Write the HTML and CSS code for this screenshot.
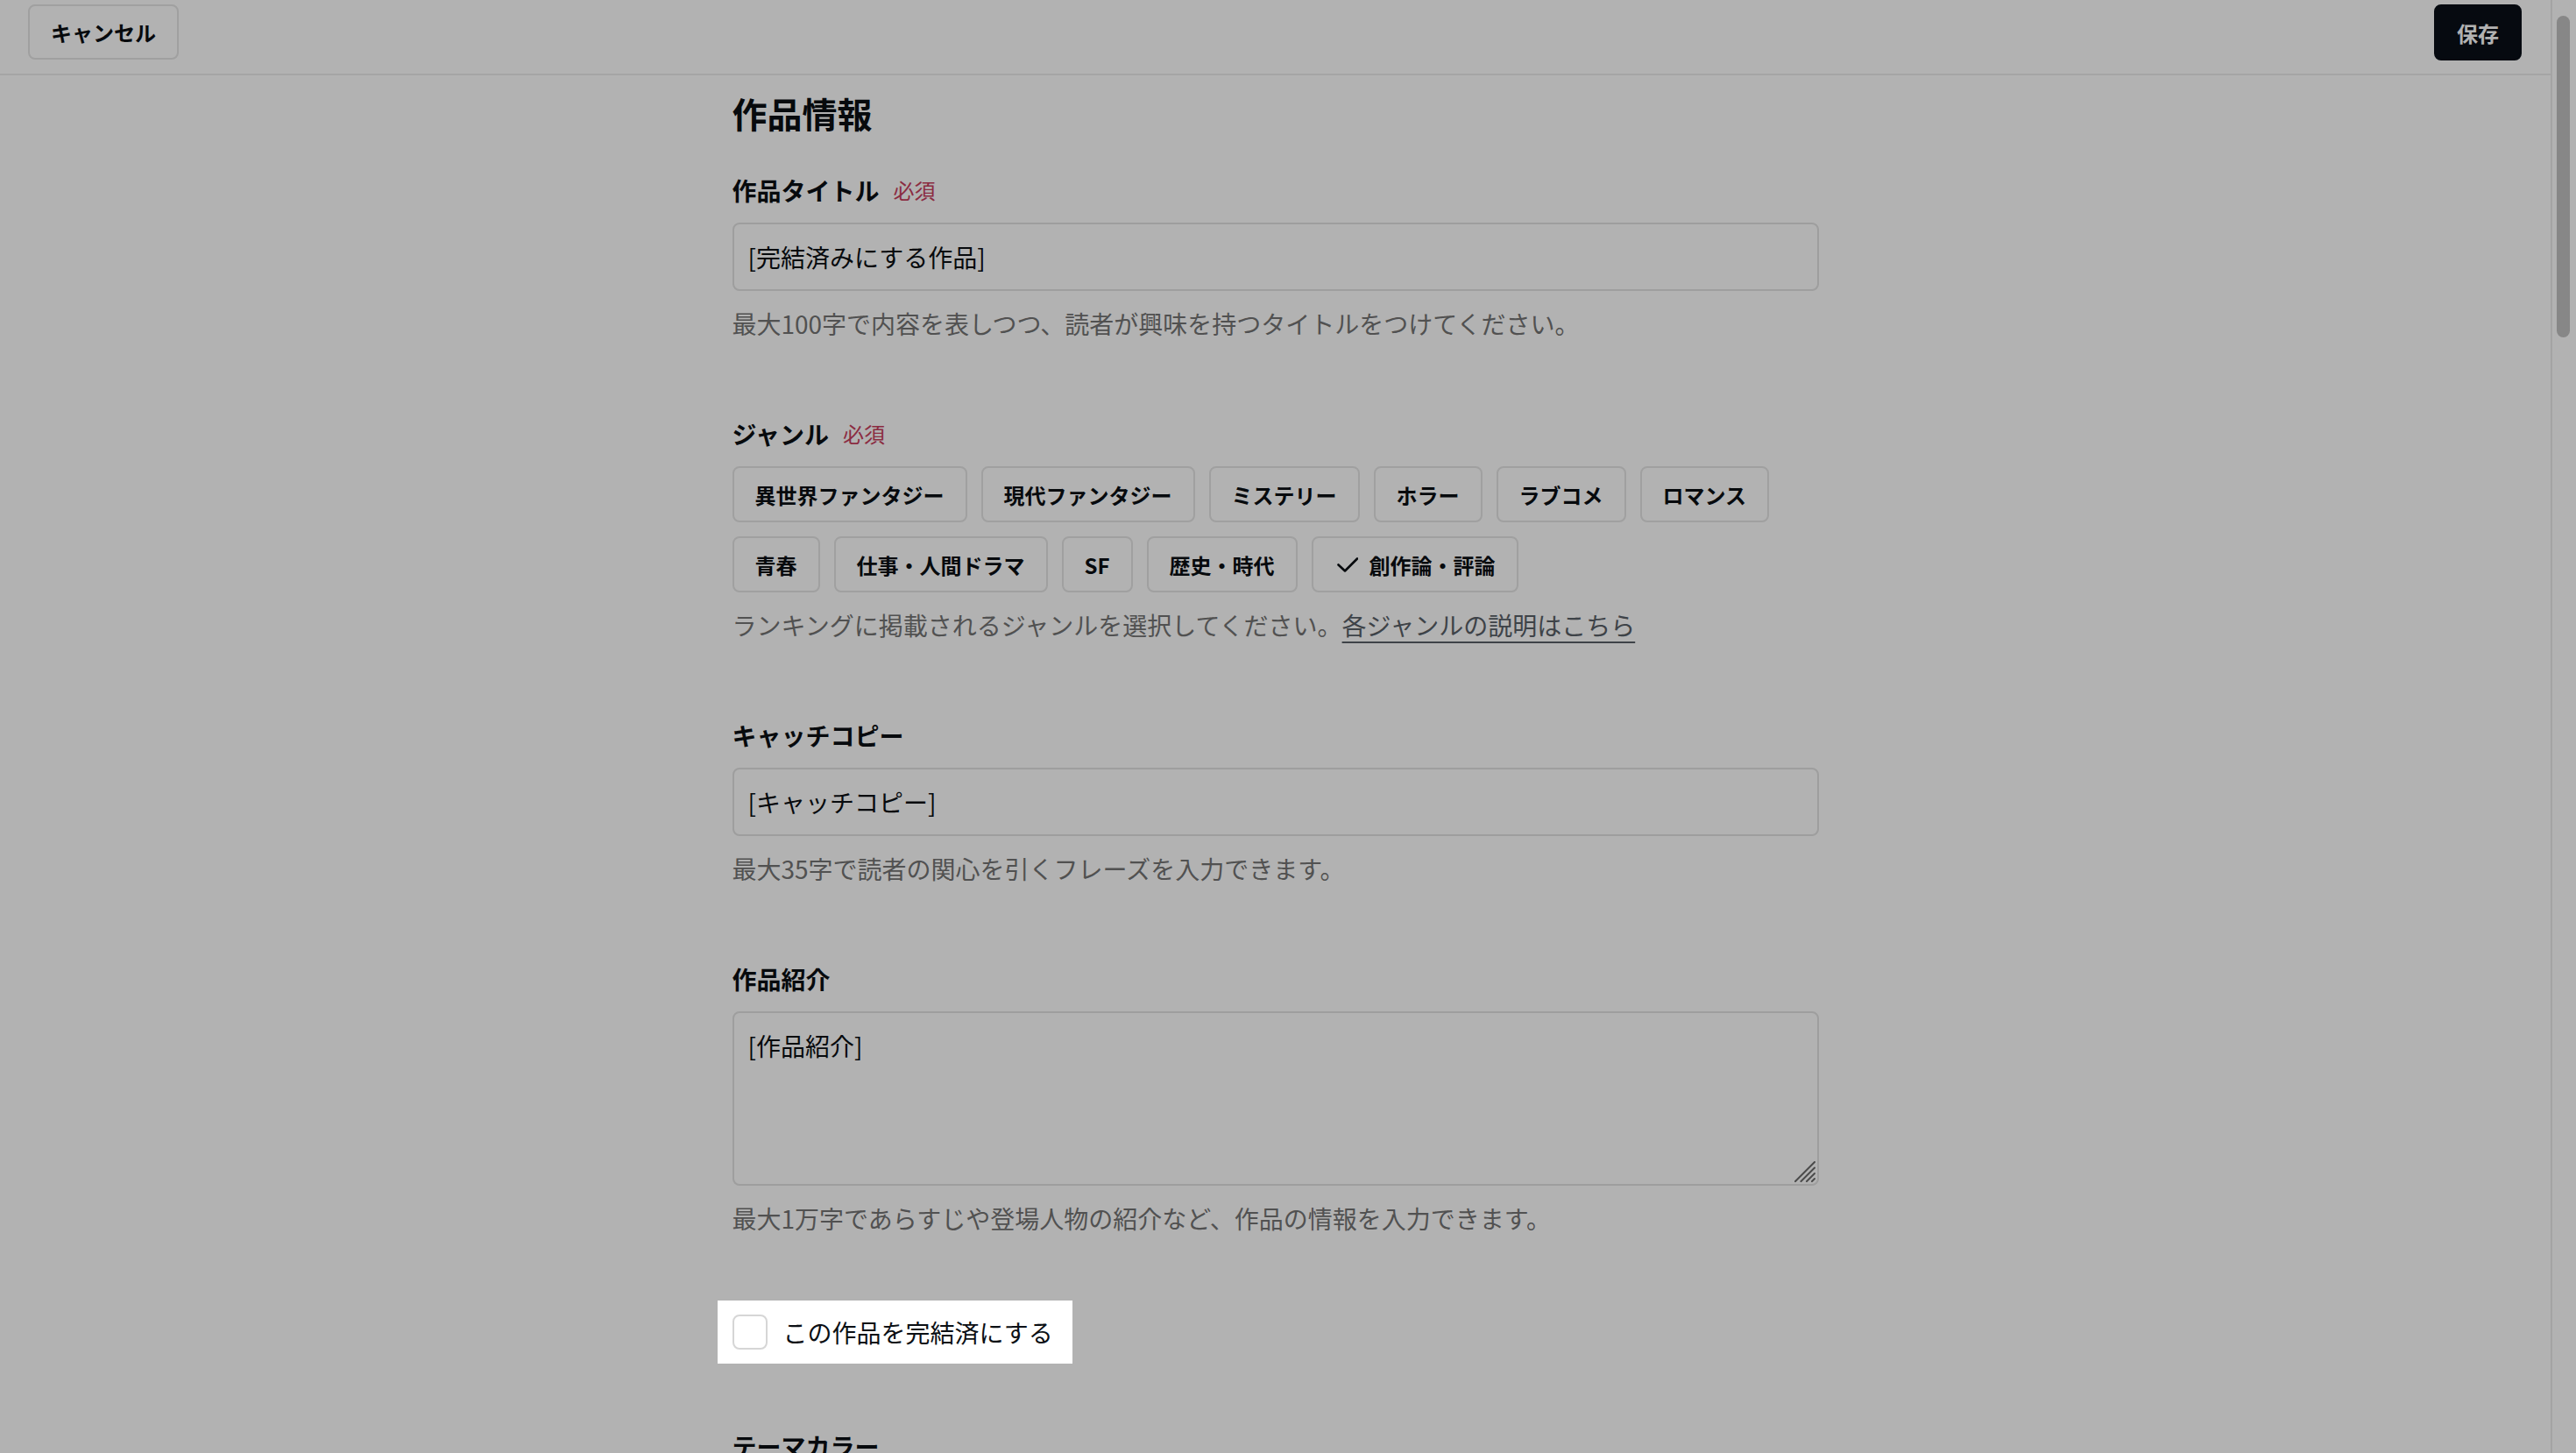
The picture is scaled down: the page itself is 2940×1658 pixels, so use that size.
FILE: index.html
```html
<!DOCTYPE html>
<html lang="ja">
<head>
    <meta charset="UTF-8">
    <meta name="viewport" content="width=device-width, initial-scale=1.0">
    <title>作品情報の編集</title>
    <link rel="stylesheet" href="styles.css">
</head>
<body>

<div class="page">
    <header class="topbar">
        <button class="btn btn-outline">キャンセル</button>
        <button class="btn btn-primary">保存</button>
    </header>

    <main class="content">
        <h1 class="section-title">作品情報</h1>

        <div class="field">
            <div class="field-label">作品タイトル<span class="required">必須</span></div>
            <input type="text" class="text-input" value="[完結済みにする作品]">
            <p class="hint">最大100字で内容を表しつつ、読者が興味を持つタイトルをつけてください。</p>
        </div>

        <div class="field">
            <div class="field-label">ジャンル<span class="required">必須</span></div>
            <div class="genre-list">
                <button class="chip">異世界ファンタジー</button>
                <button class="chip">現代ファンタジー</button>
                <button class="chip">ミステリー</button>
                <button class="chip">ホラー</button>
                <button class="chip">ラブコメ</button>
                <button class="chip">ロマンス</button>
                <button class="chip">青春</button>
                <button class="chip">仕事・人間ドラマ</button>
                <button class="chip">SF</button>
                <button class="chip">歴史・時代</button>
                <button class="chip chip-selected">
                    <svg class="check" width="24" height="17" viewBox="0 0 24 17"><polyline points="1.5,8.5 9,15.5 23,1.5" fill="none" stroke="#0b0f14" stroke-width="2.6" stroke-linecap="round" stroke-linejoin="round"/></svg>
                    創作論・評論
                </button>
            </div>
            <p class="hint">ランキングに掲載されるジャンルを選択してください。<a href="#" class="hint-link">各ジャンルの説明はこちら</a></p>
        </div>

        <div class="field">
            <div class="field-label">キャッチコピー</div>
            <input type="text" class="text-input" value="[キャッチコピー]">
            <p class="hint">最大35字で読者の関心を引くフレーズを入力できます。</p>
        </div>

        <div class="field field-last">
            <div class="field-label">作品紹介</div>
            <div class="textarea-wrap">
                <textarea class="text-area">[作品紹介]</textarea>
                <svg class="resize-handle" width="24" height="24" viewBox="0 0 24 24">
                    <g stroke="#6b6b6b" stroke-width="2" stroke-linecap="round">
                        <line x1="1" y1="23" x2="23" y2="1"/>
                        <line x1="7.5" y1="23" x2="23" y2="7.5"/>
                        <line x1="14" y1="23" x2="23" y2="14"/>
                        <line x1="20" y1="23" x2="23" y2="20"/>
                    </g>
                </svg>
            </div>
            <p class="hint">最大1万字であらすじや登場人物の紹介など、作品の情報を入力できます。</p>
        </div>

        <div class="complete-row">
            <label class="complete-check">
                <input type="checkbox" class="checkbox">
                <span>この作品を完結済にする</span>
            </label>
        </div>

        <div class="field">
            <div class="field-label">テーマカラー</div>
        </div>
    </main>
</div>

<div class="scrollbar">
    <div class="scrollbar-thumb"></div>
</div>

</body>
</html>
```

FILE: styles.css
```css
html, body {
    margin: 0;
    padding: 0;
    height: 100%;
}
body {
    font-family: "Noto Sans CJK JP", "Noto Sans", sans-serif;
    background-color: #ffffff;
    color: #0b0f14;
    display: flex;
    overflow: hidden;
}
.page {
    flex: 1;
    min-width: 0;
}
.topbar {
    height: 86px;
    box-sizing: border-box;
    padding: 5px 33px 0 32px;
    display: flex;
    justify-content: space-between;
    align-items: flex-start;
    border-bottom: 2px solid #ededed;
}
.btn {
    height: 64px;
    box-sizing: border-box;
    padding: 0 24px;
    border-radius: 8px;
    font-family: inherit;
    font-size: 24px;
    font-weight: 700;
    cursor: pointer;
}
.btn-outline {
    background: #ffffff;
    color: #0b0f14;
    border: 2px solid #e5e5e5;
    height: 63px;
}
.btn-primary {
    background: #090f17;
    color: #ffffff;
    border: 2px solid #090f17;
}
.content {
    width: 1240px;
    margin: 0 auto;
    padding-top: 13px;
}
.section-title {
    margin: 0 0 37px;
    font-size: 40px;
    line-height: 60px;
    font-weight: 700;
}
.field {
    display: flex;
    flex-direction: column;
    gap: 16px;
    margin-bottom: 84px;
}
.field-last {
    margin-bottom: 73px;
}
.field-label {
    font-size: 28px;
    line-height: 42px;
    font-weight: 700;
    display: flex;
    align-items: center;
}
.required {
    margin-left: 16px;
    font-size: 24px;
    font-weight: 400;
    color: #c8405e;
}
.text-input {
    height: 78px;
    box-sizing: border-box;
    padding: 0 16px;
    border: 2px solid #e2e2e2;
    border-radius: 8px;
    font-family: inherit;
    font-size: 28px;
    color: #0b0f14;
    background: #ffffff;
    outline: none;
}
.textarea-wrap {
    position: relative;
    display: flex;
}
.text-area {
    flex: 1;
    height: 199px;
    box-sizing: border-box;
    padding: 15px 16px;
    border: 2px solid #e2e2e2;
    border-radius: 8px;
    font-family: inherit;
    font-size: 28px;
    line-height: 44px;
    color: #0b0f14;
    background: #ffffff;
    resize: none;
    outline: none;
}
.resize-handle {
    position: absolute;
    right: 4px;
    bottom: 4px;
    pointer-events: none;
}
.hint {
    margin: 0;
    font-size: 28px;
    line-height: 42px;
    color: #757575;
}
.hint-link {
    color: #596067;
    text-decoration: underline;
    text-decoration-thickness: 2px;
    text-underline-offset: 7px;
}
.genre-list {
    display: flex;
    flex-wrap: wrap;
    gap: 16px;
}
.chip {
    height: 64px;
    box-sizing: border-box;
    padding: 0 24px;
    display: inline-flex;
    align-items: center;
    gap: 13px;
    background: #ffffff;
    border: 2px solid #e5e5e5;
    border-radius: 8px;
    font-family: inherit;
    font-size: 24px;
    font-weight: 700;
    color: #0b0f14;
    cursor: pointer;
}
.chip-selected {
    padding-left: 27px;
}
.check {
    display: block;
}
.complete-row {
    margin: 0 0 73px;
}
.complete-check {
    position: relative;
    z-index: 10;
    display: inline-flex;
    align-items: center;
    gap: 18px;
    margin-left: -17px;
    padding: 16px 22px 16px 17px;
    background: #ffffff;
    font-size: 28px;
    line-height: 40px;
    /* spotlight: dims everything around the checkbox */
    box-shadow: 0 0 0 6000px rgba(0, 0, 0, 0.3);
}
.checkbox {
    appearance: none;
    -webkit-appearance: none;
    margin: 0;
    width: 40px;
    height: 40px;
    box-sizing: border-box;
    border: 2px solid #d6d6d6;
    border-radius: 8px;
    background: #ffffff;
}
.scrollbar {
    width: 29px;
    flex-shrink: 0;
    box-sizing: border-box;
    border-left: 2px solid #ebebeb;
    padding: 18px 0 0 5px;
    background: #ffffff;
}
.scrollbar-thumb {
    width: 15px;
    height: 367px;
    border-radius: 8px;
    background: #c2c2c2;
}
```
